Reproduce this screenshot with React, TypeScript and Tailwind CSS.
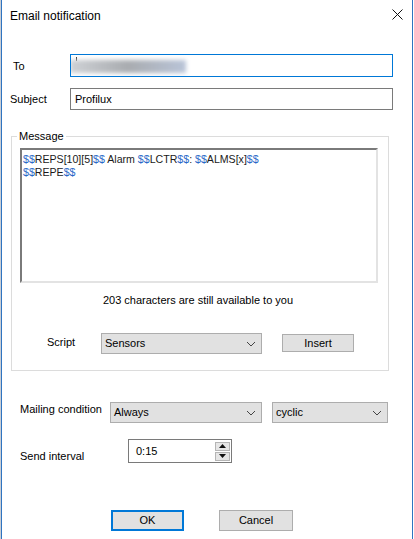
import React from "react";

const font = { fontFamily: '"Liberation Sans", Arial, sans-serif' };

function Chevron() {
  return (
    <svg width="10" height="6" viewBox="0 0 10 6" className="shrink-0">
      <path d="M1 1 L5 5 L9 1" fill="none" stroke="#444" strokeWidth="1" />
    </svg>
  );
}

function Select({ value, width }: { value: string; width: string }) {
  return (
    <div
      className={`${width} h-[21px] flex items-center justify-between pl-[3px] pr-[5px] bg-[#e1e1e1] border border-[#adadad] text-[11px] text-black`}
    >
      <span>{value}</span>
      <Chevron />
    </div>
  );
}

function Msg({ text }: { text: string }) {
  // dollar signs are shown in blue
  const parts = text.split(/(\$+)/);
  return (
    <div>
      {parts.map((p, i) =>
        p.startsWith("$") ? (
          <span key={i} className="text-[#2a68c8]">
            {p}
          </span>
        ) : (
          <span key={i}>{p}</span>
        )
      )}
    </div>
  );
}

export default function App() {
  return (
    <div className="w-[414px] h-[539px] flex bg-white overflow-hidden" style={font}>
      <div className="w-[1px] h-full bg-[#c9ced6]" />
      <div className="w-[412px] h-full border-x border-[#2f74c0] flex flex-col text-[11px] text-black">
        {/* title bar */}
        <div className="h-[31px] flex items-center justify-between pl-[8px] pr-[9px] shrink-0">
          <span className="text-[12px] text-black mt-[1px]">Email notification</span>
          <svg width="11" height="11" viewBox="0 0 11 11" className="mb-[2px]">
            <path d="M0.5 0.5 L10.5 10.5 M10.5 0.5 L0.5 10.5" stroke="#111" strokeWidth="1" />
          </svg>
        </div>

        {/* To */}
        <div className="mt-[23px] h-[23px] flex items-center shrink-0">
          <span className="w-[68px] pl-[11px] pt-[1px]">To</span>
          <div className="w-[323px] h-[23px] border border-[#0078d7] relative overflow-hidden">
            <div className="absolute left-[5px] top-[2px] w-[1px] h-[4px] bg-[#333]" />
            <div className="absolute left-[-1px] top-[5px] w-[116px] h-[13px] blur-[2px] bg-gradient-to-r from-[#cfd2d6] via-[#a9acb0] to-[#b9c4d8]" />
          </div>
        </div>

        {/* Subject */}
        <div className="mt-[11px] h-[22px] flex items-center shrink-0">
          <span className="w-[68px] pl-[8px]">Subject</span>
          <div className="w-[323px] h-[22px] border border-[#7a7a7a] flex items-center pl-[4px]">
            Profilux
          </div>
        </div>

        {/* Message group */}
        <div className="mt-[26px] ml-[9px] w-[378px] h-[235px] border border-[#dcdcdc] relative shrink-0 flex flex-col">
          <span className="absolute left-[5px] top-[-8px] bg-white px-[2px] leading-[14px]">Message</span>
          <div className="mt-[11px] ml-[8px] w-[358px] h-[135px] border-2 border-t-[#7a7a7a] border-l-[#7a7a7a] border-r-[#e3e3e3] border-b-[#e3e3e3] pl-[1px] pt-[3px] leading-[13px] text-[10.6px] text-[#1a1a1a]">
            <Msg text="$$REPS[10][5]$$ Alarm $$LCTR$$: $$ALMS[x]$$" />
            <Msg text="$$REPE$$" />
          </div>
          <div className="mt-[10px] text-center pr-[4px] leading-[14px]">203 characters are still available to you</div>
          <div className="mt-[26px] flex items-start">
            <span className="ml-[35px] w-[54px] mt-[1px]">Script</span>
            <Select value="Sensors" width="w-[161px]" />
            <div className="ml-[20px] mt-[1px] w-[72px] h-[18px] bg-[#e1e1e1] border border-[#adadad] flex items-center justify-center">
              Insert
            </div>
          </div>
        </div>

        {/* Mailing condition */}
        <div className="mt-[31px] flex items-start shrink-0">
          <span className="ml-[18px] w-[90px] mt-[-1px]">Mailing condition</span>
          <Select value="Always" width="w-[152px]" />
          <div className="ml-[10px]">
            <Select value="cyclic" width="w-[116px]" />
          </div>
        </div>

        {/* Send interval */}
        <div className="mt-[16px] flex items-start shrink-0">
          <span className="ml-[18px] w-[108px] mt-[9px]">Send interval</span>
          <div className="w-[104px] h-[24px] border border-[#7a7a7a] flex items-center justify-between pl-[7px] pr-[1px]">
            <span>0:15</span>
            <div className="flex flex-col gap-[1px]">
              <div className="w-[15px] h-[9px] bg-[#e6e6e6] border border-[#b5b5b5] flex items-center justify-center">
                <svg width="7" height="4" viewBox="0 0 7 4"><path d="M3.5 0 L7 4 L0 4 Z" fill="#111" /></svg>
              </div>
              <div className="w-[15px] h-[9px] bg-[#e6e6e6] border border-[#b5b5b5] flex items-center justify-center">
                <svg width="7" height="4" viewBox="0 0 7 4"><path d="M0 0 L7 0 L3.5 4 Z" fill="#111" /></svg>
              </div>
            </div>
          </div>
        </div>

        {/* buttons */}
        <div className="mt-[45px] flex shrink-0">
          <div className="ml-[109px] w-[73px] h-[21px] bg-[#e1e1e1] border-2 border-[#0078d7] flex items-center justify-center">
            OK
          </div>
          <div className="ml-[35px] w-[74px] h-[21px] bg-[#e1e1e1] border border-[#adadad] flex items-center justify-center">
            Cancel
          </div>
        </div>
      </div>
      <div className="w-[1px] h-full bg-white" />
    </div>
  );
}
